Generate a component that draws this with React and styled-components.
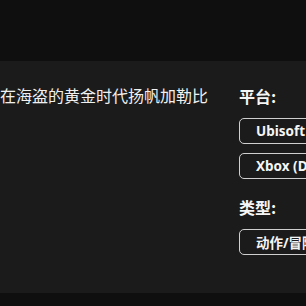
import React from "react";
import styled, { createGlobalStyle } from "styled-components";

const Global = createGlobalStyle`
  html, body { margin: 0; padding: 0; background: #0f0f0f; overflow: hidden; }
  body { font-family: "Noto Sans", "Noto Sans CJK SC", sans-serif; color: #f2f2f2; }
`;

const Page = styled.div`
  width: 306px;
  height: 306px;
  display: flex;
  flex-direction: column;
  overflow: hidden;
`;

const TopBand = styled.div`
  height: 61px;
  background: #0f0f0f;
  flex-shrink: 0;
`;

const Panel = styled.section`
  height: 232px;
  background: #1b1b1b;
  display: flex;
  gap: 33px;
  padding-top: 22px;
  box-sizing: border-box;
  flex-shrink: 0;
`;

const Description = styled.p`
  margin: 0;
  width: 206px;
  flex-shrink: 0;
  font-family: "Noto Sans CJK SC", sans-serif;
  font-size: 16px;
  line-height: 24px;
  color: #f0f0f0;
  white-space: nowrap;
`;

const Side = styled.aside`
  display: flex;
  flex-direction: column;
  flex-shrink: 0;
`;

const Heading = styled.h3`
  margin: ${(p) => p.$top}px 0 0;
  font-family: "Noto Sans CJK SC", sans-serif;
  font-size: 16px;
  font-weight: 700;
  line-height: 24px;
  color: #f5f5f5;
`;

const Tags = styled.div`
  display: flex;
  flex-direction: column;
  gap: 9px;
  margin-top: 10px;
`;

const Tag = styled.span`
  display: inline-flex;
  align-items: center;
  height: 26px;
  box-sizing: border-box;
  padding: 0 16px;
  border: 1px solid #cfcfcf;
  border-radius: 5px;
  font-family: "Noto Sans", "Noto Sans CJK SC", sans-serif;
  font-size: 13.5px;
  font-weight: 700;
  color: #f5f5f5;
  white-space: nowrap;
  width: max-content;
`;

const BottomBand = styled.div`
  flex: 1;
  background: #0f0f0f;
`;

export default function App() {
  return (
    <Page>
      <Global />
      <TopBand />
      <Panel>
        <Description>在海盗的黄金时代扬帆加勒比</Description>
        <Side>
          <Heading $top={1}>平台:</Heading>
          <Tags>
            <Tag>Ubisoft Connect</Tag>
            <Tag>Xbox (Digital)</Tag>
          </Tags>
          <Heading $top={16}>类型:</Heading>
          <Tags>
            <Tag>动作/冒险</Tag>
          </Tags>
        </Side>
      </Panel>
      <BottomBand />
    </Page>
  );
}
